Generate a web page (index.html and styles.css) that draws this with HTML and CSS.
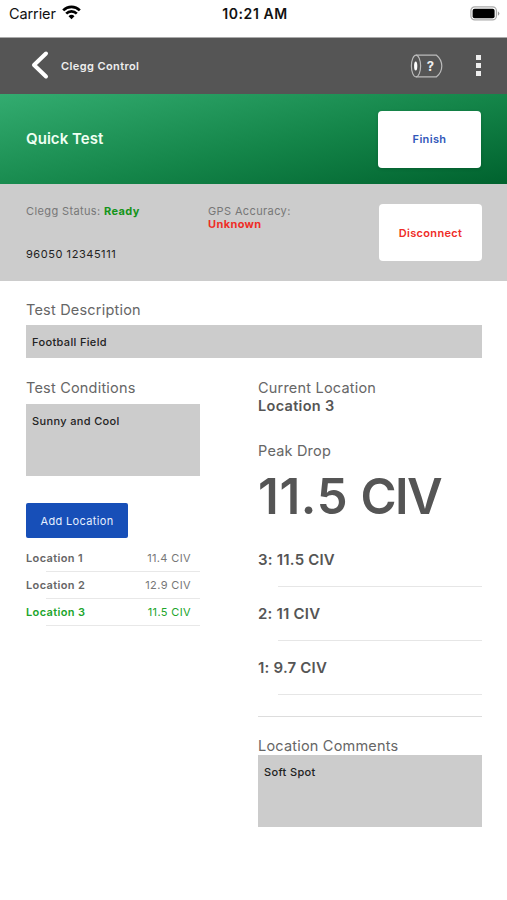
FILE: index.html
```html
<!DOCTYPE html>
<html lang="en">
<head>
<meta charset="utf-8">
<title>Clegg Control</title>
<link rel="stylesheet" href="styles.css">
</head>
<body>
<div class="status-bar">
  <div class="carrier"><span>Carrier</span>
    <svg class="wifi" width="19" height="15" viewBox="0 0 19 15" fill="none" stroke="#000" stroke-width="2.7"><path d="M1.2 5.4C5.8 .7 13.200 .7 17.800 5.400"/><path d="M4.200 8.600c3-3 7.600-3 10.600 0"/><path d="M9.500 14.200 6.500 11.200q3-2.700 6 0z" fill="#000" stroke="none"/></svg>
  </div>
  <div class="time">10:21 AM</div>
  <svg class="battery" width="31" height="15" viewBox="0 0 31 15"><rect x="1.900" y=".9" width="25.500" height="13" rx="3.800" fill="#fff" stroke="#aaa" stroke-width="1.200"/><rect x="3.600" y="2.800" width="22" height="9.400" rx="2"/><path d="M28.900 5.200q3 2.300 0 4.600z" fill="#999"/></svg>
</div>
<header class="nav">
  <svg class="back" width="18" height="30" viewBox="0 0 18 30" fill="none" stroke="#fff" stroke-width="4" stroke-linecap="round" stroke-linejoin="round"><path d="M15 3.500 3 15l12 11.500"/></svg>
  <span class="nav-title">Clegg Control</span>
  <svg class="device" width="34" height="24" viewBox="0 0 34 24" fill="none" stroke="#bbb" stroke-width="1.200"><ellipse cx="6" cy="12" rx="4.600" ry="10.800"/><path d="M6 1.200h20.500c3.400 2.800 5.300 6.500 5.300 10.800s-1.900 8-5.300 10.800H6"/><ellipse cx="5.700" cy="12" rx="1.600" ry="4.500" fill="#fff" stroke="none"/><text class="device-mark" x="20.400" y="16.800" text-anchor="middle">?</text></svg>
  <div class="more"><i></i><i></i><i></i></div>
</header>
<section class="hero">
  <h1>Quick Test</h1>
  <button class="card-button finish">Finish</button>
</section>
<section class="info">
  <div class="clegg">
    <div class="info-line"><span class="status-label">Clegg Status:</span> <b class="ready">Ready</b></div>
    <div class="serial">96050 12345111</div>
  </div>
  <div class="gps"><div class="gps-label">GPS Accuracy:</div><b class="unknown">Unknown</b></div>
  <button class="card-button disconnect">Disconnect</button>
</section>
<main>
  <div class="label">Test Description</div>
  <div class="field description">Football Field</div>
  <div class="columns">
    <section class="left">
      <div class="label">Test Conditions</div>
      <div class="field conditions">Sunny and Cool</div>
      <button class="add">Add Location</button>
      <ul class="locations">
        <li><b>Location 1</b><span>11.4 CIV</span></li>
        <li><b>Location 2</b><span>12.9 CIV</span></li>
        <li class="active"><b>Location 3</b><span>11.5 CIV</span></li>
      </ul>
    </section>
    <section class="right">
      <div class="label">Current Location</div>
      <div class="current">Location 3</div>
      <div class="label peak">Peak Drop</div>
      <div class="reading"><span class="value">11.5</span> <span class="unit">CIV</span></div>
      <ul class="drops">
        <li>3: 11.5 CIV</li>
        <li>2: 11 CIV</li>
        <li>1: 9.7 CIV</li>
      </ul>
      <div class="label comments-label">Location Comments</div>
      <div class="field comments">Soft Spot</div>
    </section>
  </div>
</main>
</body>
</html>
```
FILE: styles.css
```css
* { box-sizing: border-box; }
body { margin: 0; width: 507px; height: 900px; overflow: hidden; background: #fff; font-family: Inter, sans-serif; color: #555; }
h1, ul { margin: 0; padding: 0; list-style: none; }
button { border: 0; padding: 0; font-family: inherit; }
svg { display: block; flex: none; }

.status-bar { height: 38px; padding: 5px 7px 0 9px; display: grid; grid-template-columns: 1fr auto 1fr; align-items: start; color: #111; border-bottom: 1px solid #aaa; }
.carrier { display: flex; gap: 6px; font-size: 14.5px; line-height: 18px; letter-spacing: -.1px; }
.time { font-size: 14px; font-weight: 600; line-height: 18px; letter-spacing: .6px; margin-right: -1px; }
.battery { justify-self: end; margin-top: 1px; }

.nav { height: 56px; background: #555; display: flex; align-items: center; padding: 0 26px 0 31px; }
.back { margin-top: -2px; }
.nav-title { margin-left: 12px; color: #eee; font-size: 11px; font-weight: 600; letter-spacing: .4px; }
.device { margin-left: auto; }
.device-mark { fill: #eee; stroke: none; font: 700 13px Inter, sans-serif; }
.more { margin: -2px 0 0 32px; display: grid; gap: 3px; }
.more i { width: 5px; height: 5px; background: #eee; }

.hero { height: 90px; padding: 0 26px; display: flex; align-items: center; justify-content: space-between; background: linear-gradient(168deg, #33ac70 0%, #148549 55%, #00622e 100%); }
.hero h1 { color: #effff2; font-size: 15px; font-weight: 600; line-height: 20px; letter-spacing: .05px; margin-top: -1px; }
.card-button { width: 103px; height: 57px; border-radius: 4px; background: #fff; font-size: 11px; font-weight: 600; letter-spacing: .35px; }
.finish { color: #3157b9; box-shadow: 0 1px 3px #00401f55; }
.disconnect { color: #ef2c27; }

.info { height: 97px; background: #ccc; display: grid; grid-template-columns: 182px 1fr 103px; padding: 20px 25px 0 26px; font-size: 11px; line-height: 13px; letter-spacing: .38px; color: #777; }
.clegg { padding-top: 1px; }
.gps { padding-top: 1px; }
.ready { color: #15941a; }
.unknown { color: #ef2c27; }
.info b { font-weight: 700; }
.serial { margin-top: 30px; color: #222; letter-spacing: .55px; }

main { padding: 20px 25px 0 26px; }
.label { height: 18px; font-size: 14.5px; line-height: 18px; letter-spacing: .2px; color: #666; white-space: nowrap; }
.field { background: #ccc; color: #222; font-size: 11px; line-height: 14px; letter-spacing: .35px; padding: 10px 6px; font-weight: 500; }
.description { height: 33px; margin-top: 6px; }
.columns { margin-top: 21px; display: grid; grid-template-columns: 174px 224px; justify-content: space-between; }
.conditions { height: 72px; margin-top: 7px; }
.add { display: block; width: 102px; height: 35px; margin-top: 27px; border-radius: 2px; background: #174fb8; color: #e6efff; font-size: 11px; letter-spacing: .35px; }
.locations { margin-top: 7px; font-size: 11px; letter-spacing: .37px; }
.locations li { height: 27px; line-height: 26px; display: flex; justify-content: space-between; padding-right: 9px; color: #777; background: linear-gradient(#e8e8e8, #e8e8e8) 100% 100% / 154px 1px no-repeat; }
.locations b { font-weight: 600; color: #666; }
.locations .active, .locations .active b { color: #20a52b; }
.current { height: 18px; font-size: 14.5px; font-weight: 600; line-height: 18px; letter-spacing: .3px; }
.peak { margin-top: 27px; }
.reading { height: 60px; margin-top: 7px; font-size: 49px; font-weight: 600; line-height: 60px; white-space: nowrap; }
.value { letter-spacing: .7px; }
.unit { letter-spacing: -1.600px; }
.drops { margin-top: 6px; height: 184px; border-bottom: 1px solid #ddd; }
.drops li { height: 54px; padding-top: 18px; font-size: 15px; font-weight: 600; line-height: 18px; letter-spacing: .2px; background: linear-gradient(#e6e6e6, #e6e6e6) 100% 100% / 204px 1px no-repeat; }
.comments-label { margin-top: 20px; }
.comments { height: 72px; }
```
